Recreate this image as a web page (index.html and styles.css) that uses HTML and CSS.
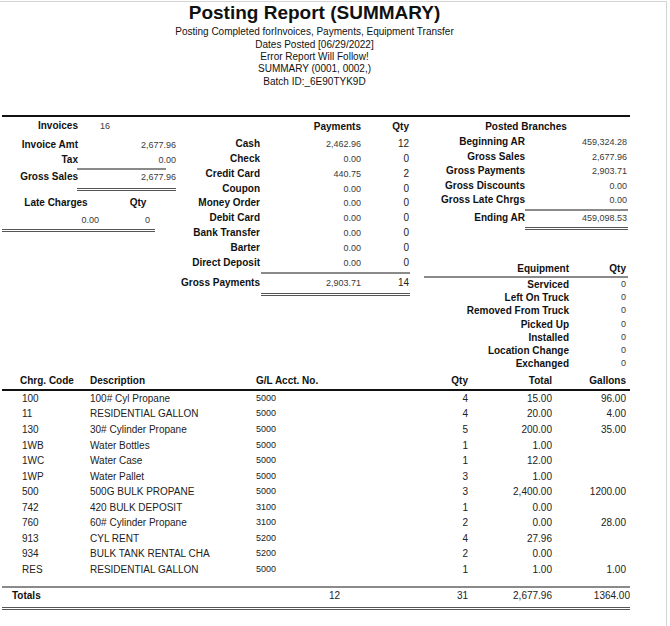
FILE: index.html
```html
<!DOCTYPE html>
<html>
<head>
<meta charset="utf-8">
<link rel="stylesheet" href="styles.css">
</head>
<body>
<div class="sheet">
  <header class="head">
    <h1 class="title">Posting Report (SUMMARY)</h1>
    <div class="subs">
      <div>Posting Completed forInvoices, Payments, Equipment Transfer</div>
      <div>Dates Posted [06/29/2022]</div>
      <div>Error Report Will Follow!</div>
      <div>SUMMARY (0001, 0002,)</div>
      <div>Batch ID:_6E90TYK9D</div>
    </div>
  </header>

  <div class="rule-thick top-rule"></div>

  <section class="summary">
    <div class="col-left">
      <div class="lrow r-inv"><span class="lab l-lab">Invoices</span><span class="val inv-count">16</span></div>
      <div class="lrow r-amt"><span class="lab l-lab">Invoice Amt</span><span class="val l-val">2,677.96</span></div>
      <div class="lrow r-tax"><span class="lab l-lab">Tax</span><span class="val l-val">0.00</span></div>
      <div class="line-single l-tax-line"></div>
      <div class="lrow r-gross"><span class="lab l-lab">Gross Sales</span><span class="val l-val">2,677.96</span></div>
      <div class="line-double l-gross-line"></div>
      <div class="lrow r-late"><span class="lab late-lab">Late Charges</span><span class="lab late-qty">Qty</span></div>
      <div class="lrow r-latev"><span class="val late-v">0.00</span><span class="val late-q">0</span></div>
      <div class="line-double l-late-line"></div>
    </div>

    <div class="col-mid">
      <div class="mrow m-head"><span class="m-lab"></span><span class="lab m-amt">Payments</span><span class="lab m-qty">Qty</span></div>
      <div class="m-list">
        <div class="mrow"><span class="lab m-lab">Cash</span><span class="val m-amt">2,462.96</span><span class="qty m-qty">12</span></div>
        <div class="mrow"><span class="lab m-lab">Check</span><span class="val m-amt">0.00</span><span class="qty m-qty">0</span></div>
        <div class="mrow"><span class="lab m-lab">Credit Card</span><span class="val m-amt">440.75</span><span class="qty m-qty">2</span></div>
        <div class="mrow"><span class="lab m-lab">Coupon</span><span class="val m-amt">0.00</span><span class="qty m-qty">0</span></div>
        <div class="mrow"><span class="lab m-lab">Money Order</span><span class="val m-amt">0.00</span><span class="qty m-qty">0</span></div>
        <div class="mrow"><span class="lab m-lab">Debit Card</span><span class="val m-amt">0.00</span><span class="qty m-qty">0</span></div>
        <div class="mrow"><span class="lab m-lab">Bank Transfer</span><span class="val m-amt">0.00</span><span class="qty m-qty">0</span></div>
        <div class="mrow"><span class="lab m-lab">Barter</span><span class="val m-amt">0.00</span><span class="qty m-qty">0</span></div>
        <div class="mrow"><span class="lab m-lab">Direct Deposit</span><span class="val m-amt">0.00</span><span class="qty m-qty">0</span></div>
      </div>
      <div class="line-single m-line"></div>
      <div class="mrow m-gross"><span class="lab m-lab">Gross Payments</span><span class="val m-amt">2,903.71</span><span class="qty m-qty">14</span></div>
      <div class="line-double m-dline"></div>
    </div>

    <div class="col-right">
      <div class="lab b-head">Posted Branches</div>
      <div class="b-list">
        <div class="brow"><span class="lab b-lab">Beginning AR</span><span class="val b-val">459,324.28</span></div>
        <div class="brow"><span class="lab b-lab">Gross Sales</span><span class="val b-val">2,677.96</span></div>
        <div class="brow"><span class="lab b-lab">Gross Payments</span><span class="val b-val">2,903.71</span></div>
        <div class="brow"><span class="lab b-lab">Gross Discounts</span><span class="val b-val">0.00</span></div>
        <div class="brow"><span class="lab b-lab">Gross Late Chrgs</span><span class="val b-val">0.00</span></div>
      </div>
      <div class="line-single b-line"></div>
      <div class="brow b-end"><span class="lab b-lab">Ending AR</span><span class="val b-val">459,098.53</span></div>
      <div class="line-double b-dline"></div>

      <div class="erow e-head"><span class="lab e-lab">Equipment</span><span class="lab e-qty">Qty</span></div>
      <div class="line-single e-line"></div>
      <div class="e-list">
        <div class="erow"><span class="lab e-lab">Serviced</span><span class="val e-qty">0</span></div>
        <div class="erow"><span class="lab e-lab">Left On Truck</span><span class="val e-qty">0</span></div>
        <div class="erow"><span class="lab e-lab">Removed From Truck</span><span class="val e-qty">0</span></div>
        <div class="erow"><span class="lab e-lab">Picked Up</span><span class="val e-qty">0</span></div>
        <div class="erow"><span class="lab e-lab">Installed</span><span class="val e-qty">0</span></div>
        <div class="erow"><span class="lab e-lab">Location Change</span><span class="val e-qty">0</span></div>
        <div class="erow"><span class="lab e-lab">Exchanged</span><span class="val e-qty">0</span></div>
      </div>
    </div>
  </section>

  <section class="detail">
    <div class="trow t-head">
      <span class="lab c-code">Chrg. Code</span>
      <span class="lab c-desc">Description</span>
      <span class="lab c-gl">G/L Acct. No.</span>
      <span class="lab c-qty">Qty</span>
      <span class="lab c-tot">Total</span>
      <span class="lab c-gal">Gallons</span>
    </div>
    <div class="rule-thick t-rule"></div>
    <div class="t-body">
      <div class="trow"><span class="c-code">100</span><span class="c-desc">100# Cyl Propane</span><span class="c-gl">5000</span><span class="c-qty">4</span><span class="c-tot">15.00</span><span class="c-gal">96.00</span></div>
      <div class="trow"><span class="c-code">11</span><span class="c-desc">RESIDENTIAL GALLON</span><span class="c-gl">5000</span><span class="c-qty">4</span><span class="c-tot">20.00</span><span class="c-gal">4.00</span></div>
      <div class="trow"><span class="c-code">130</span><span class="c-desc">30# Cylinder Propane</span><span class="c-gl">5000</span><span class="c-qty">5</span><span class="c-tot">200.00</span><span class="c-gal">35.00</span></div>
      <div class="trow"><span class="c-code">1WB</span><span class="c-desc">Water Bottles</span><span class="c-gl">5000</span><span class="c-qty">1</span><span class="c-tot">1.00</span><span class="c-gal"></span></div>
      <div class="trow"><span class="c-code">1WC</span><span class="c-desc">Water Case</span><span class="c-gl">5000</span><span class="c-qty">1</span><span class="c-tot">12.00</span><span class="c-gal"></span></div>
      <div class="trow"><span class="c-code">1WP</span><span class="c-desc">Water Pallet</span><span class="c-gl">5000</span><span class="c-qty">3</span><span class="c-tot">1.00</span><span class="c-gal"></span></div>
      <div class="trow"><span class="c-code">500</span><span class="c-desc">500G BULK PROPANE</span><span class="c-gl">5000</span><span class="c-qty">3</span><span class="c-tot">2,400.00</span><span class="c-gal">1200.00</span></div>
      <div class="trow"><span class="c-code">742</span><span class="c-desc">420 BULK DEPOSIT</span><span class="c-gl">3100</span><span class="c-qty">1</span><span class="c-tot">0.00</span><span class="c-gal"></span></div>
      <div class="trow"><span class="c-code">760</span><span class="c-desc">60# Cylinder Propane</span><span class="c-gl">3100</span><span class="c-qty">2</span><span class="c-tot">0.00</span><span class="c-gal">28.00</span></div>
      <div class="trow"><span class="c-code">913</span><span class="c-desc">CYL RENT</span><span class="c-gl">5200</span><span class="c-qty">4</span><span class="c-tot">27.96</span><span class="c-gal"></span></div>
      <div class="trow"><span class="c-code">934</span><span class="c-desc">BULK TANK RENTAL CHA</span><span class="c-gl">5200</span><span class="c-qty">2</span><span class="c-tot">0.00</span><span class="c-gal"></span></div>
      <div class="trow"><span class="c-code">RES</span><span class="c-desc">RESIDENTIAL GALLON</span><span class="c-gl">5000</span><span class="c-qty">1</span><span class="c-tot">1.00</span><span class="c-gal">1.00</span></div>
    </div>
    <div class="line-single tot-line"></div>
    <div class="trow t-total">
      <span class="lab c-code tot-lab">Totals</span>
      <span class="c-desc"></span>
      <span class="c-gl tot-cnt">12</span>
      <span class="c-qty">31</span>
      <span class="c-tot">2,677.96</span>
      <span class="c-gal tot-gal">1364.00</span>
    </div>
    <div class="line-double tot-dline"></div>
  </section>
</div>
</body>
</html>
```

FILE: styles.css
```css
html, body {
  margin: 0;
  padding: 0;
  background: #fff;
}
body {
  font-family: "Liberation Sans", Arial, sans-serif;
  color: #222;
  font-size: 10px;
}
.sheet {
  width: 664px;
  height: 624px;
  margin-top: 1px;
  padding-left: 2px;
  border-top: 1px solid #d4d4d4;
  border-right: 1px solid #d4d4d4;
  overflow: hidden;
}

/* header */
.head {
  width: 625px;
  text-align: center;
}
.title {
  margin: 0;
  font-size: 19px;
  line-height: 22px;
  font-weight: bold;
  color: #111;
}
.subs {
  padding-top: 2.3px;
  font-size: 10px;
  line-height: 12.35px;
  color: #111;
}

.rule-thick {
  width: 628px;
  height: 2px;
  background: #111;
}
.top-rule {
  margin-top: 27px;
}

.lab {
  font-weight: bold;
  font-size: 10px;
  color: #111;
}
.val {
  font-size: 9px;
  color: #3a3a3a;
}
.qty {
  font-size: 10px;
  color: #222;
}

.line-single {
  height: 2px;
  background: #8a8a8a;
}
.line-double {
  height: 1px;
  border-top: 1px solid #555;
  border-bottom: 1px solid #555;
}

/* summary grid */
.summary {
  display: grid;
  grid-template-columns: 178px 238px 212px;
  align-items: start;
  padding-top: 1px;
}

/* left */
.lrow {
  display: flex;
  height: 14px;
  line-height: 14px;
  white-space: nowrap;
}
.l-lab { width: 76px; text-align: right; }
.l-val { width: 98px; text-align: right; }
.r-inv { height: 16px; line-height: 16px; }
.inv-count { margin-left: 22px; }
.r-amt { margin-top: 4px; }
.r-tax { margin-top: 1px; }
.l-tax-line { margin-top: 1px; margin-left: 75px; width: 89px; }
.l-gross-line { margin-top: 4px; margin-left: 75px; width: 99px; }
.r-late { margin-top: 5px; }
.late-lab { width: 108px; text-align: center; }
.late-qty { width: 56px; text-align: center; }
.r-latev { margin-top: 3px; }
.late-v { width: 97px; text-align: right; }
.late-q { width: 51px; text-align: right; }
.l-late-line { margin-top: 2px; width: 153px; }

/* middle */
.mrow {
  display: flex;
  height: 14.85px;
  line-height: 14.85px;
  white-space: nowrap;
}
.m-lab { width: 80px; text-align: right; flex: none; }
.m-amt { width: 101px; text-align: right; flex: none; }
.m-qty { width: 48px; text-align: right; flex: none; }
.m-head { height: 17px; line-height: 17px; }
.m-list { margin-top: 2px; }
.m-line { margin-top: 1px; margin-left: 81px; width: 149px; }
.m-gross { margin-top: 2px; height: 14px; line-height: 14px; }
.m-dline { margin-top: 3px; margin-left: 81px; width: 149px; }

/* right */
.b-head {
  height: 17px;
  line-height: 17px;
  padding-left: 4px;
  text-align: center;
}
.brow {
  display: flex;
  height: 14.5px;
  line-height: 14.5px;
  white-space: nowrap;
}
.b-lab { width: 107px; text-align: right; flex: none; }
.b-val { width: 102px; text-align: right; flex: none; }
.b-line { margin-top: 1px; margin-left: 107px; width: 103px; }
.b-end { margin-top: 0.5px; height: 14px; line-height: 14px; }
.b-dline { margin-top: 2px; margin-left: 107px; width: 103px; }

.erow {
  display: flex;
  height: 13.2px;
  line-height: 13.2px;
  white-space: nowrap;
}
.e-lab { width: 151px; text-align: right; flex: none; }
.e-qty { width: 57px; text-align: right; flex: none; }
.e-head { margin-top: 32px; height: 14px; line-height: 14px; }
.e-line { margin-left: 6px; width: 204px; }

/* detail table */
.detail {
  margin-top: 3.6px;
}
.trow {
  display: grid;
  grid-template-columns: 88px 166px 164px 48px 84px 74px 4px;
  height: 15.55px;
  line-height: 15.55px;
  white-space: nowrap;
  font-size: 10px;
  color: #222;
}
.t-head {
  height: 14px;
  line-height: 14px;
}
.t-head .c-code { padding-left: 18px; }
.t-rule { margin-top: 1px; }
.c-code { padding-left: 20px; }
.c-gl { font-size: 9px; }
.c-qty, .c-tot, .c-gal { text-align: right; }
.t-head .c-gl { font-size: 10px; }
.tot-line { margin-top: 9px; width: 628px; }
.t-total {
  height: 16px;
  line-height: 16px;
}
.t-total .tot-lab { padding-left: 10px; }
.tot-cnt { font-size: 10px; text-align: right; padding-right: 80px; }
.tot-gal { grid-column: 6 / span 2; }
.tot-dline { margin-top: 3px; width: 628px; }
```
